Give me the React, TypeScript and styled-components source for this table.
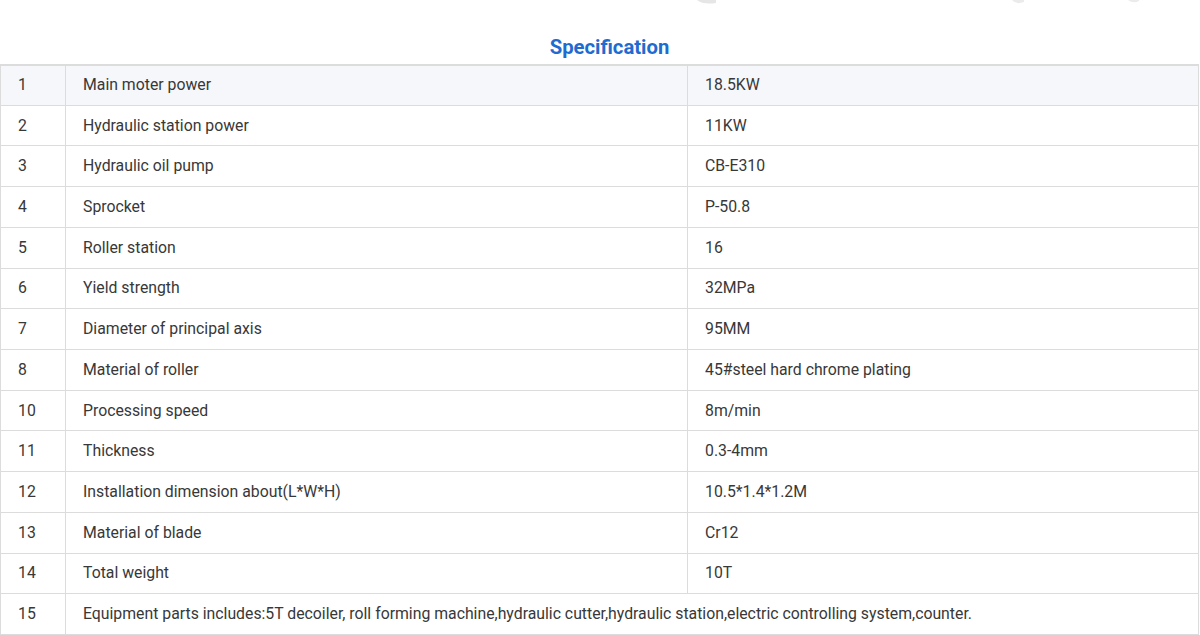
import React from "react";
import styled, { createGlobalStyle } from "styled-components";

const Global = createGlobalStyle`
  html, body { margin: 0; padding: 0; background: #fff; }
  body { font-family: Roboto, "Liberation Sans", Arial, sans-serif; color: #333; }
`;

const Page = styled.div`
  width: 1200px;
  display: flex;
  flex-direction: column;
`;

const TopStrip = styled.svg`
  display: block;
  width: 1200px;
  height: 8px;
`;

const Title = styled.h2`
  margin: 0;
  padding-top: 28px;
  height: 27.5px;
  font-size: 20.3px;
  font-weight: 700;
  line-height: 22px;
  color: #1f6bd0;
  text-align: center;
  padding-left: 19px;
`;

const Table = styled.table`
  width: 1199px;
  border-collapse: collapse;
  border-top: 2px solid #dcdcdc;
  table-layout: fixed;
  font-size: 15.8px;
`;

const Row = styled.tr<{ $head?: boolean }>`
  height: 40.72px;
  background: ${(p) => (p.$head ? "#f5f7fa" : "#fff")};
`;

const Cell = styled.td`
  border: 1px solid #dcdcdc;
  padding: 0 0 0 17px;
  color: #383838;
  white-space: nowrap;
  line-height: 18px;
  vertical-align: middle;
`;

const data: [string, string, string?][] = [
  ["1", "Main moter power", "18.5KW"],
  ["2", "Hydraulic station power", "11KW"],
  ["3", "Hydraulic oil pump", "CB-E310"],
  ["4", "Sprocket", "P-50.8"],
  ["5", "Roller station", "16"],
  ["6", "Yield strength", "32MPa"],
  ["7", "Diameter of principal axis", "95MM"],
  ["8", "Material of roller", "45#steel hard chrome plating"],
  ["10", "Processing speed", "8m/min"],
  ["11", "Thickness", "0.3-4mm"],
  ["12", "Installation dimension about(L*W*H)", "10.5*1.4*1.2M"],
  ["13", "Material of blade", "Cr12"],
  ["14", "Total weight", "10T"],
  [
    "15",
    "Equipment parts includes:5T decoiler, roll forming machine,hydraulic cutter,hydraulic station,electric controlling system,counter.",
  ],
];

export default function App() {
  return (
    <Page>
      <Global />
      <TopStrip viewBox="0 0 1200 8">
        <path d="M697 0 Q703 5 716 3 L716 0 Z" fill="#e6e6e6" />
        <path d="M1012 0 Q1016 5 1024 2 L1024 0 Z" fill="#ebebeb" />
        <path d="M1128 0 Q1133 4 1139 1 L1139 0 Z" fill="#ebebeb" />
      </TopStrip>
      <Title>Specification</Title>
      <Table>
        <colgroup>
          <col style={{ width: 65 }} />
          <col style={{ width: 622 }} />
          <col />
        </colgroup>
        <tbody>
          {data.map(([n, name, val], i) => (
            <Row key={n} $head={i === 0}>
              <Cell>{n}</Cell>
              {val !== undefined ? (
                <>
                  <Cell>{name}</Cell>
                  <Cell>{val}</Cell>
                </>
              ) : (
                <Cell colSpan={2}>{name}</Cell>
              )}
            </Row>
          ))}
        </tbody>
      </Table>
    </Page>
  );
}
